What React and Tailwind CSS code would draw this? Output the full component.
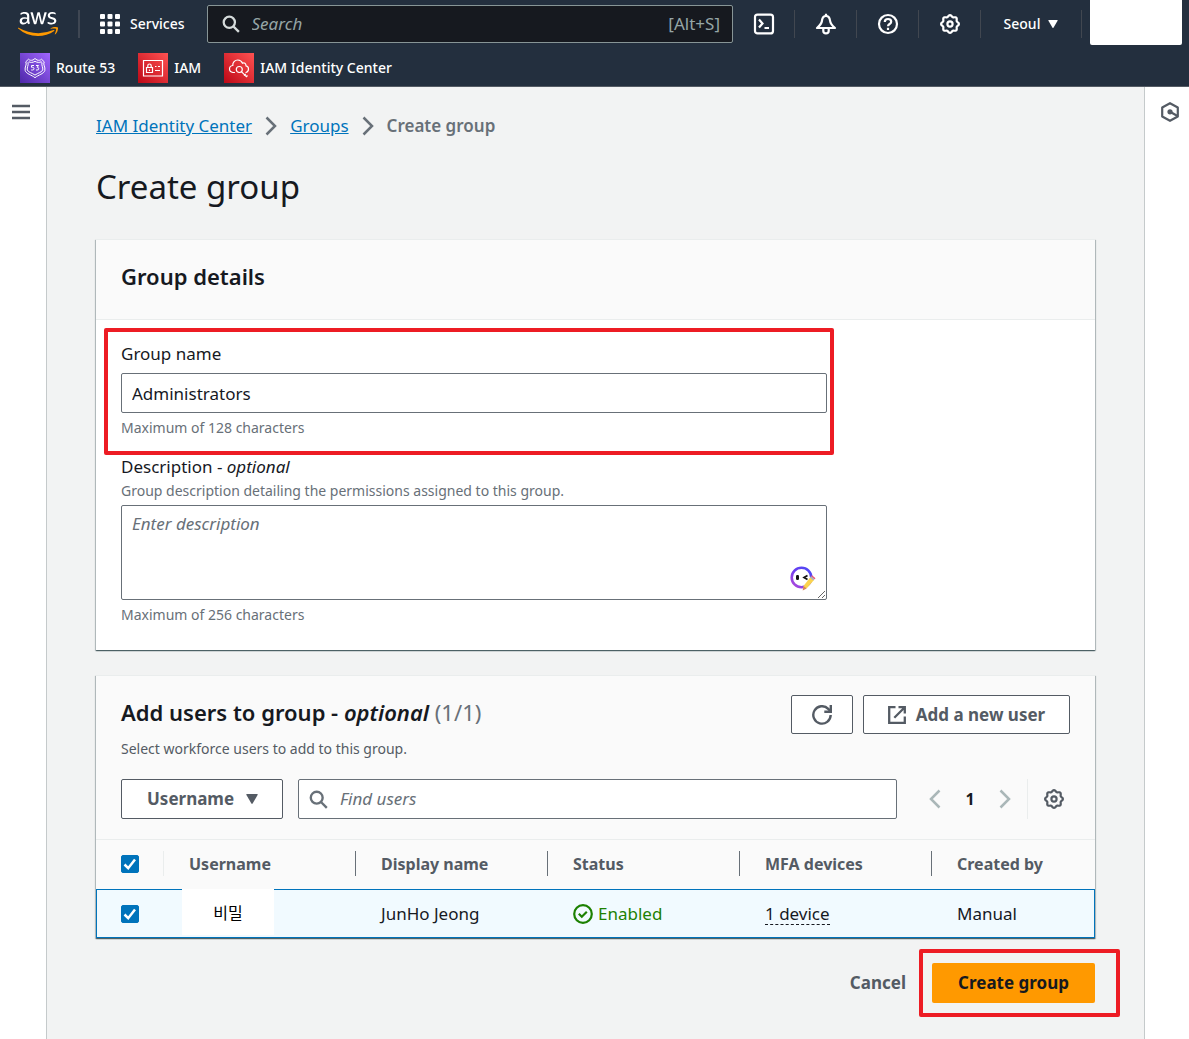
import { useState } from "react";
import { FaAws } from "react-icons/fa";

const users = [
  {
    id: 1,
    username: "비밀",
    displayName: "JunHo Jeong",
    status: "Enabled",
    mfa: "1 device",
    createdBy: "Manual",
  },
];

const columns = ["Username", "Display name", "Status", "MFA devices", "Created by"];

/* ---------- Icons ---------- */
const SearchIcon = ({ className }) => (
  <svg viewBox="0 0 16 16" className={className} fill="none" stroke="currentColor" strokeWidth="2">
    <circle cx="6.5" cy="6.5" r="5" />
    <path d="M10.3 10.3l4.7 4.7" />
  </svg>
);

// eight rounded teeth around the hub
const gearPoints = Array.from({ length: 96 }, (_, i) => {
  const angle = (i / 96) * 2 * Math.PI;
  const r = 8.1 + 0.8 * Math.cos(8 * angle);
  return `${(10 + r * Math.sin(angle)).toFixed(2)},${(10 - r * Math.cos(angle)).toFixed(2)}`;
}).join(" ");

const GearIcon = ({ className }) => (
  <svg viewBox="0 0 20 20" className={className} fill="none" stroke="currentColor" strokeWidth="2.2">
    <polygon points={gearPoints} strokeLinejoin="round" />
    <circle cx="10" cy="10" r="2.6" />
  </svg>
);

const Caret = ({ className }) => (
  <svg viewBox="0 0 12 10" className={className} fill="currentColor">
    <path d="M.8 0h10.4q.9 0 .5.8L6.600 9.600q-.6.700-1.200 0L.3.8Q-.1 0 .8 0z" />
  </svg>
);

const Chevron = ({ className }) => (
  <svg viewBox="0 0 12 20" className={className} fill="none" stroke="currentColor" strokeWidth="2.5">
    <path d="M1.500 1.500L10 10l-8.500 8.500" />
  </svg>
);

const Route53Icon = () => (
  <svg viewBox="0 0 30 30" className="size-[30px]">
    <defs>
      <linearGradient id="purple" x1="0" y1="1" x2="1" y2="0">
        <stop offset="0" stopColor="#4d27a8" />
        <stop offset="1" stopColor="#a166ff" />
      </linearGradient>
    </defs>
    <rect width="30" height="30" fill="url(#purple)" />
    <g fill="none" stroke="#fff" strokeLinejoin="round">
      <path d="M15 5.500l2 1.500c2 .6 3.500.3 4.500-.8l2.700 2.600c-1.500 3 1.500 5 .6 8.700-1 3.500-6.300 4.200-9.800 7.200-3.500-3-8.800-3.700-9.800-7.200-.9-3.700 2.100-5.700.6-8.700l2.700-2.600c1 1.100 2.500 1.400 4.500.8z" />
      <path d="M15 8.300c2.200 1.400 4.500 1.400 6.200.5l.8.800c-.8 2.900 1.300 4.700.7 7.300-.8 2.500-4.700 2.900-7.700 5.200-3-2.300-6.900-2.700-7.700-5.200-.6-2.600 1.500-4.400.7-7.300l.8-.8c1.700.9 4 .9 6.200-.5z" />
      <path d="M14 12.500h-2.500v1.800h1q1.500.1 1.500 1.400t-1.500 1.300h-1.300M16 12.500h2.500l-1.300 1.800q1.500 0 1.500 1.400t-1.500 1.300H16" />
    </g>
  </svg>
);

const RedTile = ({ children }) => (
  <svg viewBox="0 0 30 30" className="size-[30px]">
    <defs>
      <linearGradient id="red" x1="0" y1="1" x2="1" y2="0">
        <stop offset="0" stopColor="#bd0816" />
        <stop offset="1" stopColor="#ff5252" />
      </linearGradient>
    </defs>
    <rect width="30" height="30" fill="url(#red)" />
    <g fill="none" stroke="#fff" strokeWidth="1.200">
      {children}
    </g>
  </svg>
);

const IamIcon = () => (
  <RedTile>
    <path d="M5.500 7.500h19v15.500h-19z" />
    <path d="M8.500 14.500h6v5h-6zM9.800 14.500v-1.800q0-1.700 1.700-1.700t1.700 1.700v1.800M11.500 16.500v1.500" />
    <path d="M17 13.500h1.500M20 13.500h2M17 17.500h5" />
  </RedTile>
);

const IdentityIcon = () => (
  <RedTile>
    <path
      strokeLinecap="round"
      d="M10.500 19.500H9C6.500 19 5.500 17.500 5.500 16c0-2 1.300-3.300 3.300-3.500-.3-3 2-5.500 5-5.500 2.500 0 4 1.500 4.700 3.200 1.800-.9 3.500.2 3.500 2.600 1.700.3 2.500 1.700 2.500 3.200 0 1.800-1 3-2.500 3.500"
    />
    <circle cx="15.300" cy="16.500" r="3" />
    <path d="M17.400 18.700l5.200 5.200M21.800 20.800l-1.700 1.800M23.500 22.500l-1.500 1.500" />
  </RedTile>
);

const AssistantIcon = () => (
  <svg viewBox="0 0 26 26" className="absolute right-[11px] bottom-2 size-[26px]">
    <defs>
      <linearGradient id="ring" x1="0" y1="1" x2="1" y2="0">
        <stop offset="0" stopColor="#b84bd8" />
        <stop offset=".5" stopColor="#6a3df0" />
        <stop offset="1" stopColor="#4a4cf5" />
      </linearGradient>
    </defs>
    <circle cx="11.500" cy="11.500" r="9.800" fill="#fff" stroke="url(#ring)" strokeWidth="2.600" />
    <rect x="6" y="9" width="3" height="5" rx="1.200" fill="#111" />
    <path d="M17.500 9.500L14 11.500l3.500 2" fill="none" stroke="#111" strokeWidth="1.700" />
    <path d="M13.500 20l7-9 3.500 3-7 8-3.700 1.600z" fill="#fbd34d" />
    <path d="M13.500 20l3.200 2.400-4 2.200z" fill="#d9825b" />
    <path d="M20 11.600l1.200-1.500 3.400 2.900-1.200 1.500z" fill="#a9b4c0" />
    <path d="M21.200 10.100l.8-.8 3.500 3-.9.900z" fill="#f0506e" />
  </svg>
);

/* ---------- Shared pieces ---------- */
const Checkbox = ({ label, checked, onChange }) => (
  <span className="relative block size-[18px]">
    <input
      type="checkbox"
      aria-label={label}
      checked={checked}
      onChange={onChange}
      className="peer block size-[18px] appearance-none rounded-xs border border-[#687078] bg-white checked:border-[#0073bb] checked:bg-[#0073bb]"
    />
    <svg
      viewBox="0 0 18 18"
      className="pointer-events-none absolute inset-0 hidden size-[18px] peer-checked:block"
      fill="none"
      stroke="#fff"
      strokeWidth="2.500"
    >
      <path d="M3.500 9.500l3.700 3.700L14 4.500" />
    </svg>
  </span>
);

const NavIcon = ({ label, children }) => (
  <button
    type="button"
    aria-label={label}
    className="flex h-7 w-[62px] shrink-0 items-center justify-center border-r border-[#414750] text-white"
  >
    {children}
  </button>
);

const Panel = ({ children }) => (
  <section className="border-t border-[#eaeded] bg-white shadow-[0_1px_1px_0_rgba(0,28,36,0.5),1px_1px_1px_0_rgba(0,28,36,0.2),-1px_1px_1px_0_rgba(0,28,36,0.2)]">
    {children}
  </section>
);

/* ---------- Header ---------- */
const Header = () => (
  <header className="border-b border-[#545b64] bg-[#232f3e] text-sm text-white">
    <div className="flex h-12 items-center">
      <a href="#" aria-label="AWS home" className="ml-[18px] block">
        <svg className="absolute size-0">
          <defs>
            <linearGradient id="aws" x1="0" y1="0" x2="0" y2="1">
              <stop offset=".64" stopColor="#fff" />
              <stop offset=".64" stopColor="#ff9900" />
            </linearGradient>
          </defs>
        </svg>
        <FaAws fill="url(#aws)" className="h-8 w-10" />
      </a>
      <span className="ml-5 h-7 w-0.5 bg-[#3f4753]" />
      <button type="button" className="ml-5 flex items-center gap-[10px] font-medium">
        <svg viewBox="0 0 20 20" className="size-5" fill="#fff">
          {[0, 7.5, 15].map((y) =>
            [0, 7.5, 15].map((x) => <rect key={`${x}-${y}`} x={x} y={y} width="5" height="5" rx="1" />)
          )}
        </svg>
        Services
      </button>
      <label className="ml-[22px] flex h-[38px] flex-1 items-center rounded-xs border border-[#879596] bg-[#16191f] px-3 text-[17px] text-[#95a5a6]">
        <SearchIcon className="mr-3 ml-0.5 size-[18px] text-[#d5dbdb]" />
        <input
          type="text"
          aria-label="Search"
          placeholder="Search"
          className="min-w-0 flex-1 bg-transparent outline-none placeholder:text-[#95a5a6] placeholder:italic"
        />
        <span>[Alt+S]</span>
      </label>
      <NavIcon label="CloudShell">
        <svg viewBox="0 0 22 22" className="size-[22px]" fill="none" stroke="currentColor" strokeWidth="2.200">
          <rect x="2" y="1.600" width="18" height="18.800" rx="2.500" />
          <path d="M6 6.500l3.500 4-3.500 4M11.500 15h4.500" />
        </svg>
      </NavIcon>
      <NavIcon label="Notifications">
        <svg viewBox="0 0 22 22" className="size-[22px]" fill="none" stroke="currentColor" strokeWidth="2.200">
          <path strokeLinejoin="round" d="M11 3C8.500 3 7.300 5 7 7.500 6.700 10.500 5 12.500 2 15h18C17 12.500 15.300 10.500 15 7.500 14.700 5 13.500 3 11 3z" />
          <path d="M11 .8v2.500M8.300 15.500v2.500q0 2.300 2.700 2.300t2.700-2.300v-2.500" />
        </svg>
      </NavIcon>
      <NavIcon label="Help">
        <svg viewBox="0 0 22 22" className="size-[22px]" fill="none" stroke="currentColor" strokeWidth="2.200">
          <circle cx="11" cy="11" r="9" />
          <path d="M7.800 9q0-3 3.200-3t3.200 2.700c0 2.300-3.200 2.300-3.200 4.500M11 14.800v2.200" />
        </svg>
      </NavIcon>
      <NavIcon label="Settings">
        <GearIcon className="size-5" />
      </NavIcon>
      <button
        type="button"
        className="flex h-7 w-[101px] shrink-0 items-center justify-center gap-2 border-r border-[#414750] font-medium"
      >
        Seoul
        <Caret className="h-2 w-[10px]" />
      </button>
      <div className="mr-[7px] ml-2 h-[45px] w-[92px] shrink-0 self-start rounded-b-xs bg-white" />
    </div>
    <nav className="flex h-[38px] items-center gap-[23px] px-5 pt-0.5 font-medium">
      <a href="#" className="flex items-center gap-1.5">
        <Route53Icon />
        Route 53
      </a>
      <a href="#" className="flex items-center gap-1.5">
        <IamIcon />
        IAM
      </a>
      <a href="#" className="flex items-center gap-1.5">
        <IdentityIcon />
        IAM Identity Center
      </a>
    </nav>
  </header>
);

/* ---------- Group details ---------- */
const GroupDetails = () => {
  const [name, setName] = useState("Administrators");

  return (
    <Panel>
      <h2 className="border-b border-[#eaeded] bg-[#fafafa] px-[25px] pt-[19px] pb-[26px] text-[22px] leading-[34px] font-semibold">
        Group details
      </h2>
      <div className="px-[25px] pt-5 pb-6">
        <div className="relative max-w-[706px]">
          <label htmlFor="group-name" className="block leading-[27px]">
            Group name
          </label>
          <input
            id="group-name"
            type="text"
            value={name}
            onChange={(e) => setName(e.target.value)}
            className="mt-1.5 block h-10 w-full rounded-xs border border-[#687078] bg-white px-[10px] outline-none"
          />
          <p className="mt-1 text-sm leading-[22px] text-[#687078]">Maximum of 128 characters</p>
          <div className="pointer-events-none absolute -top-3 -right-[7px] -bottom-4 -left-[17px] rounded-xs border-4 border-[#ed1c24]" />
        </div>
        <div className="mt-[14px] max-w-[706px]">
          <label htmlFor="description" className="block leading-[27px]">
            Description - <i>optional</i>
          </label>
          <p className="text-sm leading-[22px] text-[#687078]">
            Group description detailing the permissions assigned to this group.
          </p>
          <div className="relative mt-[3px]">
            <textarea
              id="description"
              placeholder="Enter description"
              className="block h-[95px] w-full resize-y rounded-xs border border-[#687078] bg-white px-[10px] py-1 leading-[27px] outline-none placeholder:text-[#687078] placeholder:italic"
            />
            <AssistantIcon />
          </div>
          <p className="mt-1 text-sm leading-[22px] text-[#687078]">Maximum of 256 characters</p>
        </div>
      </div>
    </Panel>
  );
};

/* ---------- Add users ---------- */
const AddUsers = () => {
  const [selected, setSelected] = useState([1]);
  const allSelected = selected.length === users.length;

  const toggle = (id) =>
    setSelected((prev) => (prev.includes(id) ? prev.filter((x) => x !== id) : [...prev, id]));

  return (
    <Panel>
      <div className="border-b border-[#eaeded] bg-[#fafafa] px-[25px] pt-[19px] pb-5">
        <div className="flex items-start justify-between">
          <div>
            <h2 className="text-[22px] leading-[34px] font-semibold">
              Add users to group - <i>optional</i>{" "}
              <span className="font-normal text-[#687078]">
                ({selected.length}/{users.length})
              </span>
            </h2>
            <p className="mt-[9px] text-sm leading-[22px] text-[#545b64]">
              Select workforce users to add to this group.
            </p>
          </div>
          <div className="flex gap-[10px] text-[#545b64]">
            <button
              type="button"
              aria-label="Refresh"
              className="flex h-[39px] w-[62px] items-center justify-center rounded-xs border border-[#545b64] bg-white"
            >
              <svg viewBox="0 0 20 20" className="size-5" fill="none" stroke="currentColor" strokeWidth="2.400">
                <path d="M18.700 10a8.700 8.700 0 1 1-2.500-6.200l2 2" />
                <path d="M18.800 0v6.800h-6.500" />
              </svg>
            </button>
            <button
              type="button"
              className="flex h-[39px] w-[207px] items-center justify-center gap-[10px] rounded-xs border border-[#545b64] bg-white font-bold"
            >
              <svg viewBox="0 0 18 18" className="size-[18px]" fill="none" stroke="currentColor" strokeWidth="2.300">
                <path d="M7.500 1.200H1.200v15.600h15.600v-6.300" />
                <path d="M10.500 1.200h6.300v6.300M16.800 1.200L6.300 11.700" />
              </svg>
              Add a new user
            </button>
          </div>
        </div>
        <div className="mt-[19px] flex items-center">
          <div className="relative w-[162px] shrink-0 text-[#545b64]">
            <select
              aria-label="Filter property"
              className="block h-10 w-full appearance-none rounded-xs border border-[#545b64] bg-white pl-[25px] font-bold outline-none"
            >
              <option>Username</option>
              <option>Display name</option>
            </select>
            <Caret className="pointer-events-none absolute top-[15px] right-[25px] h-[10px] w-3" />
          </div>
          <label className="ml-[15px] flex h-10 flex-1 items-center rounded-xs border border-[#687078] bg-white px-[10px]">
            <SearchIcon className="mr-3 size-[19px] text-[#687078]" />
            <input
              type="text"
              aria-label="Find users"
              placeholder="Find users"
              className="min-w-0 flex-1 bg-transparent outline-none placeholder:text-[#687078] placeholder:italic"
            />
          </label>
          <div className="ml-8 flex items-center">
            <button type="button" aria-label="Previous page" className="text-[#aab7b8]">
              <Chevron className="h-5 w-3 rotate-180" />
            </button>
            <button type="button" className="w-[58px] text-center text-base font-bold">
              1
            </button>
            <button type="button" aria-label="Next page" className="text-[#aab7b8]">
              <Chevron className="h-5 w-3" />
            </button>
          </div>
          <button
            type="button"
            aria-label="Preferences"
            className="mr-1.5 ml-4 flex h-10 items-center border-l border-[#eaeded] pl-4 text-[#545b64]"
          >
            <GearIcon className="size-5" />
          </button>
        </div>
      </div>
      <table className="w-full table-fixed border-collapse text-left">
        <thead>
          <tr className="h-[49px] bg-[#fafafa] text-base text-[#545b64]">
            <th className="w-[68px] p-0 pb-0.5">
              <div className="flex h-[25px] items-center border-r border-[#eaeded] pl-[25px]">
                <Checkbox
                  label="Select all users"
                  checked={allSelected}
                  onChange={() => setSelected(allSelected ? [] : users.map((u) => u.id))}
                />
              </div>
            </th>
            {columns.map((col, i) => (
              <th key={col} className={i === columns.length - 1 ? "w-[163px] p-0 pb-0.5" : "p-0 pb-0.5"}>
                <div
                  className={`flex h-[25px] items-center pl-[25px] font-bold ${
                    i === columns.length - 1 ? "" : "border-r border-[#687078]"
                  }`}
                >
                  {col}
                </div>
              </th>
            ))}
          </tr>
        </thead>
        <tbody>
          {users.map((user) => (
            <tr key={user.id} className="h-[49px] bg-[#f1faff] outline outline-1 -outline-offset-1 outline-[#0073bb]">
              <td className="p-0 pl-[25px]">
                <Checkbox
                  label={`Select ${user.displayName}`}
                  checked={selected.includes(user.id)}
                  onChange={() => toggle(user.id)}
                />
              </td>
              <td className="p-0 pl-[18px] align-top">
                <div className="relative flex h-[46px] w-[92px] items-center justify-center bg-white font-['Noto_Sans_CJK_KR',sans-serif] text-base text-black">
                  {user.username}
                </div>
              </td>
              <td className="p-0 pl-[25px]">{user.displayName}</td>
              <td className="p-0 pl-[25px]">
                <span className="flex items-center gap-[5px] text-[#1d8102]">
                  <svg viewBox="0 0 20 20" className="size-5" fill="none" stroke="currentColor" strokeWidth="2.200">
                    <circle cx="10" cy="10" r="8.800" />
                    <path d="M5.800 9.800l3 3 5-5" />
                  </svg>
                  {user.status}
                </span>
              </td>
              <td className="p-0 pl-[25px]">
                <button type="button" className="border-b border-dashed border-[#16191f] leading-5">
                  {user.mfa}
                </button>
              </td>
              <td className="p-0 pl-[25px]">{user.createdBy}</td>
            </tr>
          ))}
        </tbody>
      </table>
    </Panel>
  );
};

const App = () => (
  <div className="flex min-h-screen flex-col bg-[#f2f3f3] font-['Noto_Sans','Noto_Sans_CJK_KR',sans-serif] text-[17px] text-[#16191f]">
    <Header />
    <div className="flex flex-1">
      <aside className="w-[47px] shrink-0 border-r border-[#c5cacb] bg-white">
        <button type="button" aria-label="Open navigation" className="mt-[17px] ml-3 block text-[#545b64]">
          <svg viewBox="0 0 18 16" className="h-4 w-[18px]" stroke="currentColor" strokeWidth="2.400">
            <path d="M0 2h18M0 8h18M0 14h18" />
          </svg>
        </button>
      </aside>
      <main className="min-w-0 flex-1 px-[49px] pt-[25px]">
        <nav aria-label="Breadcrumb" className="flex items-center gap-[13px] leading-[27px] text-[#687078]">
          <a href="#" className="text-[#0073bb] underline">
            IAM Identity Center
          </a>
          <Chevron className="h-5 w-3" />
          <a href="#" className="text-[#0073bb] underline">
            Groups
          </a>
          <Chevron className="h-5 w-3" />
          <span className="font-semibold">Create group</span>
        </nav>
        <h1 className="mt-[25px] mb-[30px] text-[33px] leading-[45px]">Create group</h1>
        <GroupDetails />
        <div className="mt-[25px]">
          <AddUsers />
        </div>
        <div className="mt-[25px] flex items-center justify-end gap-[26px] font-bold">
          <button type="button" className="text-[#545b64]">
            Cancel
          </button>
          <div className="relative">
            <button type="button" className="block h-10 w-[163px] rounded-xs bg-[#ff9900]">
              Create group
            </button>
            <div className="pointer-events-none absolute -top-[14px] -right-[25px] -bottom-[14px] -left-[13px] rounded-xs border-4 border-[#ed1c24]" />
          </div>
        </div>
      </main>
      <aside className="w-[45px] shrink-0 border-l border-[#c5cacb] bg-white">
        <button type="button" aria-label="Open help panel" className="mt-[15px] ml-[15px] block text-[#545b64]">
          <svg viewBox="0 0 20 20" className="size-5" fill="none" stroke="currentColor" strokeWidth="2.200">
            <path strokeLinejoin="round" d="M10 1.200l7.800 4.300v9L10 18.800l-7.800-4.300v-9z" />
            <circle cx="10" cy="9.800" r="2.600" fill="currentColor" stroke="none" />
            <path d="M10 9.800l7.500 4.200" />
          </svg>
        </button>
      </aside>
    </div>
  </div>
);

export default App;
